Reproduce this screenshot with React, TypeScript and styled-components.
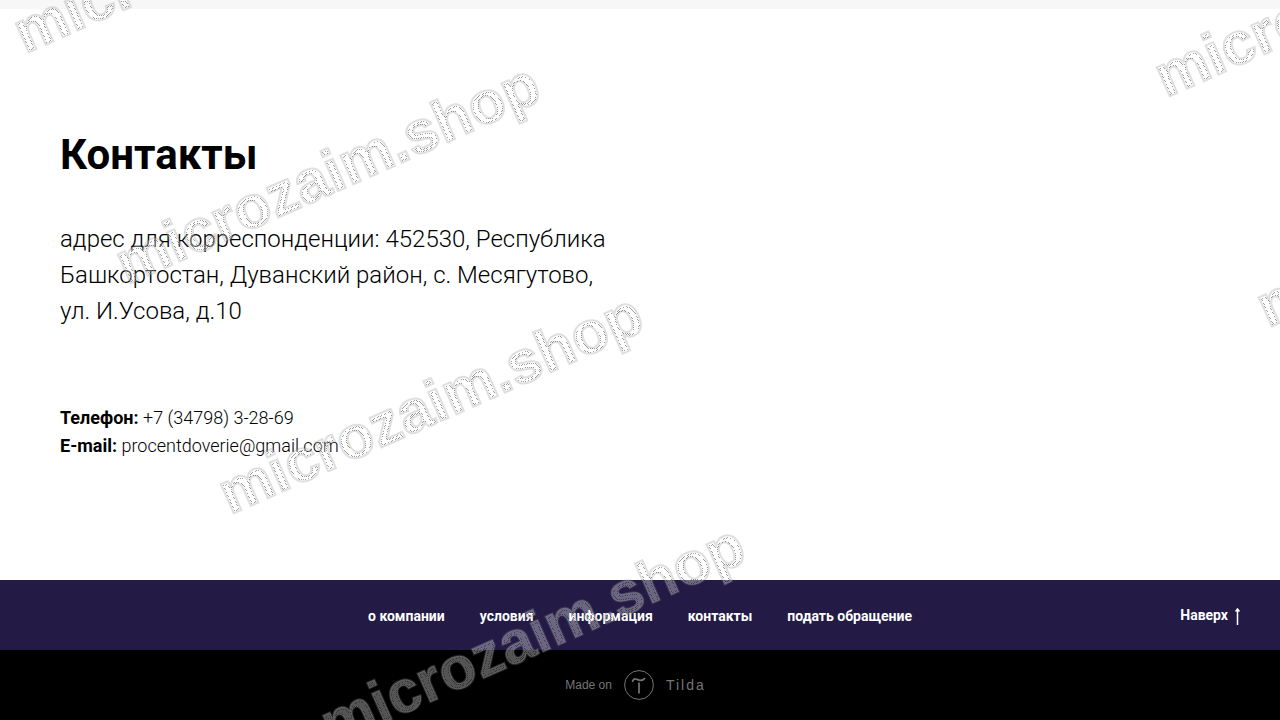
import React from "react";
import styled, { createGlobalStyle } from "styled-components";

const Global = createGlobalStyle`
  * { box-sizing: border-box; }
  body { margin: 0; background: #fff; color: #000; font-family: Roboto, "Liberation Sans", sans-serif; }
  a { color: inherit; text-decoration: none; }
`;

const Page = styled.div`
  position: relative;
  min-height: 100vh;
  overflow: hidden;
`;

const PreviousSection = styled.div`
  height: 9px;
  background: #f7f7f7;
`;

const Contacts = styled.main`
  max-width: 1200px;
  padding: 120px 20px 120px;
  margin: 0 auto;
`;

const Title = styled.h1`
  margin: 0 0 40px;
  font-size: 42px;
  line-height: 52px;
  font-weight: 700;
`;

const Address = styled.p`
  max-width: 560px;
  margin: 0 0 75px;
  font-size: 24px;
  line-height: 36px;
  font-weight: 300;
`;

const Details = styled.address`
  font-size: 18px;
  line-height: 28px;
  font-style: normal;
  font-weight: 300;
`;

const Detail = styled.div``;

const Label = styled.strong`
  font-weight: 700;
`;

const Menu = styled.footer`
  display: grid;
  grid-template-columns: 1fr auto 1fr;
  align-items: center;
  height: 70px;
  padding: 0 40px;
  background: #231b45;
  color: #fff;
  font-size: 14px;
  line-height: 20px;
  font-weight: 700;
`;

const Nav = styled.nav`
  grid-column: 2;
  display: flex;
  gap: 35px;
  padding-top: 2px;
`;

const ToTop = styled.button`
  display: flex;
  align-items: center;
  justify-self: end;
  gap: 7px;
  padding: 0;
  border: 0;
  background: none;
  color: inherit;
  font: inherit;
  cursor: pointer;
`;

const Arrow = styled.svg`
  margin-top: 2px;
`;

const MadeOn = styled.div`
  display: flex;
  align-items: center;
  justify-content: center;
  height: 70px;
  background: #000;
`;

const TildaLink = styled.a`
  display: flex;
  align-items: center;
  gap: 12px;
  padding-right: 9px;
  && { color: #757575; }
  font-family: "Liberation Sans", Arial, sans-serif;
  font-size: 12px;
  line-height: 16px;
`;

const Brand = styled.span`
  font-size: 14px;
  letter-spacing: 2px;
`;

const Watermark = styled.svg`
  position: absolute;
  inset: 0;
  width: 100%;
  height: 100%;
  pointer-events: none;
  font-family: "Liberation Sans", Arial, sans-serif;
  font-size: 60px;
  font-weight: 700;
`;

const marks = [[25, 54], [127, 285], [230, 515], [332, 746], [1166, 98], [1268, 328]];

const links = ["о компании", "условия", "информация", "контакты", "подать обращение"];

export default function App() {
  return (
    <Page>
      <Global />
      <PreviousSection />
      <Contacts>
        <Title>Контакты</Title>
        <Address>адрес для корреспонденции: 452530, Республика Башкортостан, Дуванский район, с. Месягутово, ул. И.Усова, д.10</Address>
        <Details>
          <Detail><Label>Телефон:</Label> <a href="tel:+73479832869">+7 (34798) 3-28-69</a></Detail>
          <Detail><Label>E-mail:</Label> <a href="mailto:procentdoverie@gmail.com">procentdoverie@gmail.com</a></Detail>
        </Details>
      </Contacts>
      <Menu>
        <Nav>{links.map((l) => <a key={l} href="#">{l}</a>)}</Nav>
        <ToTop type="button">
          Наверх
          <Arrow width="5" height="17" viewBox="0 0 5 17" fill="none" stroke="currentColor" aria-hidden="true">
            <path d="M2.5 17V1M0.5 3.5l2-2.5 2 2.5" strokeWidth="1.5" />
          </Arrow>
        </ToTop>
      </Menu>
      <MadeOn>
        <TildaLink href="#">
          Made on
          <svg width="30" height="30" viewBox="0 0 30 30" fill="none" stroke="currentColor" aria-hidden="true">
            <circle cx="15" cy="15" r="14.4" strokeWidth="1" />
            <path d="M8.5 12c.2-2.300 1.500-3.200 3.200-3 1.700.2 2.600 1.300 4.400 1.300 1.900 0 3.700-.4 5-2.300M15 12.500V23.500" strokeWidth="1.700" />
          </svg>
          <Brand>Tilda</Brand>
        </TildaLink>
      </MadeOn>
      <Watermark aria-hidden="true">
        <defs>
          <filter id="inline" filterUnits="userSpaceOnUse" x="0" y="0" width="100%" height="100%" colorInterpolationFilters="sRGB">
            <feComponentTransfer in="SourceGraphic" result="solid">
              <feFuncA type="discrete" tableValues="0 1" />
            </feComponentTransfer>
            <feMorphology in="solid" operator="erode" radius="1" result="outer" />
            <feOffset in="outer" dx="1" dy="0" result="east" />
            <feOffset in="outer" dx="-1" dy="0" result="west" />
            <feOffset in="outer" dx="0" dy="1" result="south" />
            <feOffset in="outer" dx="0" dy="-1" result="north" />
            <feComposite in="east" in2="west" operator="in" result="across" />
            <feComposite in="south" in2="north" operator="in" result="down" />
            <feComposite in="across" in2="down" operator="in" result="inner" />
            <feComposite in="outer" in2="inner" operator="out" />
          </filter>
          <pattern id="checks" width="2" height="2" patternUnits="userSpaceOnUse">
            <path d="M0 0h1v1H0zM1 1h1v1H1z" fill="#fff" shapeRendering="crispEdges" />
          </pattern>
          <mask id="dots" maskUnits="userSpaceOnUse" x="0" y="0" width="100%" height="100%">
            <rect width="100%" height="100%" fill="url(#checks)" />
          </mask>
        </defs>
        <g fill="#fff" fillOpacity="0.33" stroke="#808080" strokeOpacity="0.25" strokeWidth="2">
          <g id="marks">
            {marks.map(([x, y]) => (
              <text key={`${x}-${y}`} transform={`translate(${x} ${y}) rotate(-24)`}>microzaim.shop</text>
            ))}
          </g>
        </g>
        <g mask="url(#dots)" opacity="0.38">
          <g filter="url(#inline)">
            <use href="#marks" fill="#000" />
          </g>
        </g>
      </Watermark>
    </Page>
  );
}
